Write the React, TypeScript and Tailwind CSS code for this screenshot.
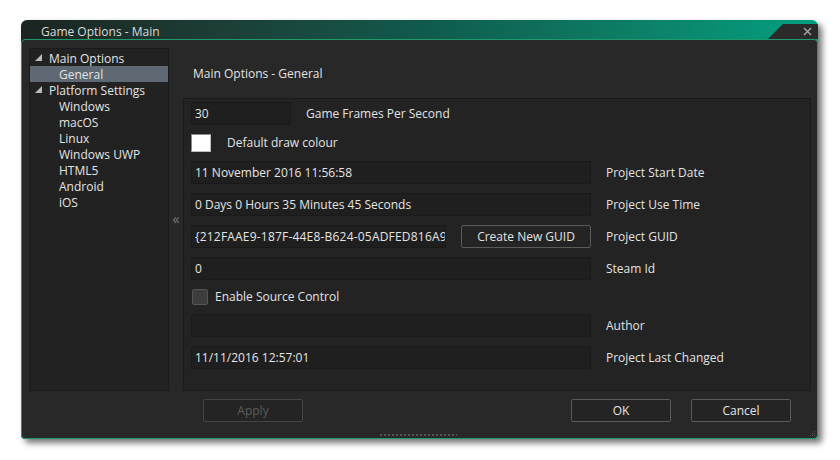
import React from "react";

const platforms = ["Windows", "macOS", "Linux", "Windows UWP", "HTML5", "Android", "iOS"];

function TreeArrow() {
  return (
    <svg width="8" height="8" viewBox="0 0 8 8" className="shrink-0">
      <polygon points="7,0 7,7 0,7" fill="#b9b9b9" />
    </svg>
  );
}

function Input({ value, className = "" }: { value: string; className?: string }) {
  return (
    <div
      className={`h-[23px] shrink-0 overflow-hidden whitespace-nowrap rounded-[2px] border border-[#1a1a1a] bg-[#1f1f1f] px-[3px] leading-[21px] text-[#e4e4e4] ${className}`}
    >
      {value}
    </div>
  );
}

function Button({ label, disabled }: { label: string; disabled?: boolean }) {
  return (
    <div
      className={`flex h-[23px] w-[100px] items-center justify-center rounded-[2px] border bg-[#242424] ${
        disabled ? "border-[#454545] text-[#5c5c5c]" : "border-[#5a5a5a] text-[#e4e4e4]"
      }`}
    >
      {label}
    </div>
  );
}

function Row({ label, children }: { label: string; children: React.ReactNode }) {
  return (
    <div className="flex h-[23px] items-center">
      {children}
      <span className="ml-[15px]">{label}</span>
    </div>
  );
}

export default function App() {
  return (
    <div className="h-[460px] w-[840px] bg-white pl-[21px] pt-[20px] font-['Open_Sans',sans-serif] text-[12px] text-[#e2e2e2]">
      <div className="flex h-[419px] w-[797px] flex-col overflow-hidden rounded-t-[6px] rounded-b-[4px] bg-linear-to-r from-[#1b2422] via-[#0f5a4c] via-50% to-[#02a07f] shadow-[4px_4px_6px_rgba(0,0,0,0.55)]">
        {/* title bar */}
        <div className="flex h-[19px] shrink-0">
          <div className="pl-[20px] pt-[3px] leading-[18px] text-[#dadada]">Game Options - Main</div>
          <div className="relative ml-auto mt-[4px] h-[15px] w-[50px] bg-[#2a2a2a] [clip-path:polygon(15px_0,100%_0,100%_100%,0_100%)]">
            <svg width="9" height="9" viewBox="0 0 9 9" className="absolute left-[35px] top-[3px]">
              <path d="M1 1 L8 8 M8 1 L1 8" stroke="#a8a8a8" strokeWidth="1.4" />
            </svg>
          </div>
        </div>

        {/* body */}
        <div className="relative flex flex-1 flex-col rounded-[4px] border border-[#1f9a6b] bg-[#282828]">
          <div className="mt-[8px] flex h-[343px] pl-[7px] pr-[6px]">
            {/* tree */}
            <div className="w-[140px] shrink-0 border border-[#1a1a1a] bg-[#222222] pt-[1px] leading-[18px]">
              <div className="flex h-[16px] items-center gap-[6px] pl-[5px]">
                <TreeArrow />
                <span className="pt-[1px]">Main Options</span>
              </div>
              <div className="h-[16px] bg-[#5f6974] pl-[29px]">General</div>
              <div className="flex h-[16px] items-center gap-[6px] pl-[5px]">
                <TreeArrow />
                <span className="pt-[1px]">Platform Settings</span>
              </div>
              {platforms.map((p) => (
                <div key={p} className="h-[16px] pl-[29px]">
                  {p}
                </div>
              ))}
            </div>

            {/* collapse */}
            <div className="flex w-[14px] shrink-0 items-center justify-center pb-[2px] text-[14px] text-[#7a7a7a]">«</div>

            {/* content */}
            <div className="flex w-[628px] flex-col">
              <div className="flex h-[50px] shrink-0 items-center pl-[10px] pt-[1px]">Main Options - General</div>
              <div className="flex flex-1 flex-col gap-[9px] border border-[#1a1a1a] bg-[#232323] pl-[7px] pt-[3px]">
                <Row label="Game Frames Per Second">
                  <Input value="30" className="w-[100px]" />
                </Row>
                <div className="flex h-[18px] items-center">
                  <div className="h-[18px] w-[20px] border border-t-[#8a8a8a] border-l-[#8a8a8a] border-r-[#bdbdbd] border-b-[#bdbdbd] bg-white" />
                  <span className="ml-[16px]">Default draw colour</span>
                </div>
                <Row label="Project Start Date">
                  <Input value="11 November 2016 11:56:58" className="w-[400px]" />
                </Row>
                <Row label="Project Use Time">
                  <Input value="0 Days 0 Hours 35 Minutes 45 Seconds" className="w-[400px]" />
                </Row>
                <Row label="Project GUID">
                  <Input value="{212FAAE9-187F-44E8-B624-05ADFED816A9}" className="w-[255px] tracking-[0.2px]" />
                  <div className="ml-[15px] flex h-[23px] w-[130px] items-center justify-center rounded-[2px] border border-[#5a5a5a] bg-[#242424]">
                    Create New GUID
                  </div>
                </Row>
                <Row label="Steam Id">
                  <Input value="0" className="w-[400px]" />
                </Row>
                <div className="flex h-[16px] items-center pl-[1px]">
                  <div className="h-[16px] w-[16px] rounded-[2px] border border-[#555555] bg-[#3d3d3d]" />
                  <span className="ml-[7px]">Enable Source Control</span>
                </div>
                <Row label="Author">
                  <Input value="" className="w-[400px]" />
                </Row>
                <Row label="Project Last Changed">
                  <Input value="11/11/2016 12:57:01" className="w-[400px]" />
                </Row>
              </div>
            </div>
          </div>

          {/* buttons */}
          <div className="mt-[8px] flex pl-[181px] pr-[26px]">
            <Button label="Apply" disabled />
            <div className="ml-auto flex gap-[20px]">
              <Button label="OK" />
              <Button label="Cancel" />
            </div>
          </div>

          <div className="flex-1" />
          <div className="mb-[2px] ml-[358px] h-[2px] w-[77px] bg-[repeating-linear-gradient(90deg,#555555_0_2px,transparent_2px_4px)]" />

          <svg width="6" height="6" viewBox="0 0 6 6" className="absolute bottom-[1px] right-[1px]">
            <rect x="4" y="0" width="1" height="1" fill="#555" />
            <rect x="2" y="2" width="1" height="1" fill="#555" />
            <rect x="4" y="2" width="1" height="1" fill="#555" />
            <rect x="0" y="4" width="1" height="1" fill="#555" />
            <rect x="2" y="4" width="1" height="1" fill="#555" />
            <rect x="4" y="4" width="1" height="1" fill="#555" />
          </svg>
        </div>
      </div>
    </div>
  );
}
